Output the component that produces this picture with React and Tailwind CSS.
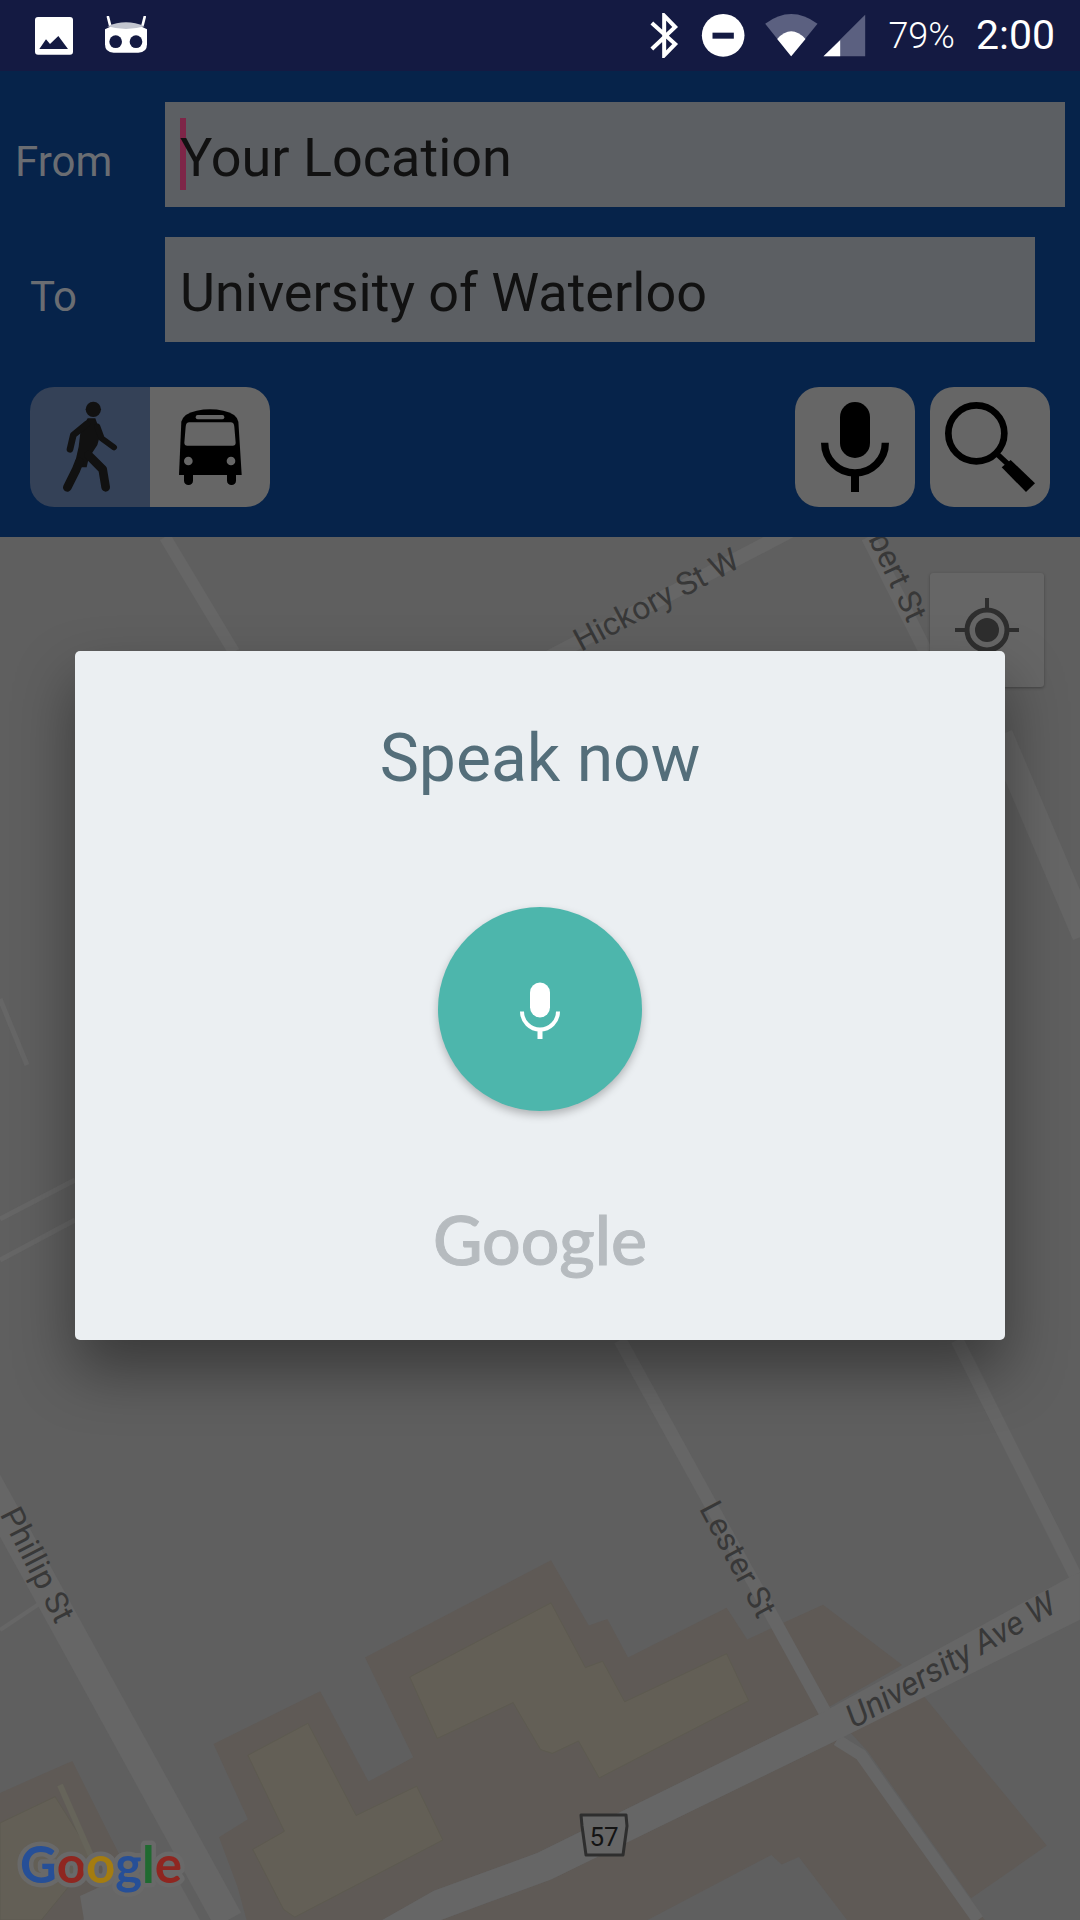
import React from 'react';

// map shapes were measured off a crop, so convert crop coords back to page px
const pts = (list) => list.map(([x, y]) => `${(x / 1.452).toFixed(1)},${(y / 2.657 + 1330).toFixed(1)}`).join(' ');

const tanBlocks = [
  [[310,1100],[465,960],[535,1200],[600,1135],[530,870],[800,612],[855,785],[882,768],[912,870],[1055,738],[1085,822],[1195,730],[1310,890],[1205,1000],[1190,1020],[780,1390],[630,1490],[555,1568],[358,1568],[345,1480],[318,1348],[360,1300]],
  [[1235,1070],[1340,970],[1520,1370],[1410,1510],[1260,1120]],
  [[640,1568],[800,1460],[1215,1090],[1250,1130],[1430,1568],[1230,1568],[1160,1400],[1135,1420],[1120,1395],[940,1568]],
  [[0,1230],[105,1145],[175,1400],[120,1568],[0,1568]],
];

const buildings = [
  [[595,922],[800,725],[850,897],[875,880],[907,988],[1055,860],[1087,985],[870,1190],[840,1092],[802,1125],[785,1115],[745,990],[635,1085]],
  [[360,1130],[447,1045],[517,1290],[605,1212],[643,1355],[428,1560],[412,1540],[367,1380],[413,1332]],
  [[0,1310],[80,1240],[135,1400],[60,1568],[0,1568]],
];

function MapLayer() {
  return (
    <svg className="absolute inset-0 w-full h-full" viewBox="0 537 1080 1383">
      <rect x="0" y="537" width="1080" height="1383" fill="#5f5f5f" />
      {tanBlocks.map((b, i) => <polygon key={i} points={pts(b)} fill="#5f5a56" />)}
      {buildings.map((b, i) => <polygon key={i} points={pts(b)} fill="#635f56" stroke="#5d5a50" strokeWidth="1" />)}

      <g fill="none" stroke="#666666" strokeLinecap="butt">
        <path d="M165 537 L234 652" strokeWidth="12" />
        <path d="M544 660 L792 530" strokeWidth="14" />
        <path d="M868 537 L926 652" strokeWidth="14" />
        <path d="M1000 735 L1085 935" strokeWidth="26" />
        <path d="M0 999 L27 1065" strokeWidth="5" />
        <path d="M0 1219 L75 1180" strokeWidth="5" />
        <path d="M0 1260 L75 1220" strokeWidth="5" />
        <path d="M620 1340 L826 1714" strokeWidth="13" />
        <path d="M837 1740 L861 1755 L978 1920" strokeWidth="12" />
        <path d="M957 1340 L1075 1575" strokeWidth="13" />
        <path d="M-30 1451 L228 1920" strokeWidth="30" />
        <path d="M0 1630 L45 1600" strokeWidth="4" />
      </g>
      <polygon points={pts([[1560,650],[1568,645],[1568,770],[1215,1090],[800,1460],[710,1520],[640,1568],[555,1568],[630,1490],[780,1390],[1190,1020]])} fill="#666666" />
      <path d="M60 1785 L92 1858" stroke="#66645a" strokeWidth="6" fill="none" />
      <polygon points="80,1896 165,1857 200,1920 84,1920" fill="#666666" />

      <g fill="#383838" fontFamily="Roboto, sans-serif" fontSize="32">
        <text transform="translate(581 652) rotate(-28)">Hickory St W</text>
        <text transform="translate(908 624) rotate(65)" textAnchor="end">Albert St</text>
        <text transform="translate(56 1625) rotate(63)" textAnchor="end">Phillip St</text>
        <text transform="translate(758 1620) rotate(62)" textAnchor="end">Lester St</text>
        <text transform="translate(854 1729) rotate(-30)" fontStyle="italic" fontSize="33">University Ave W</text>
      </g>

      <path d="M581 1815 L626 1815 L627 1826 L623 1855 L586 1855 L582 1826 Z" fill="#666666" stroke="#2e2e2e" strokeWidth="3" strokeLinejoin="round" />
      <text x="604" y="1846" textAnchor="middle" fontFamily="Roboto, sans-serif" fontSize="26" fill="#141414">57</text>

      <text x="20" y="1883" fontFamily="Lato, sans-serif" fontSize="51" fontWeight="700" stroke="#696969" strokeWidth="9" paintOrder="stroke" strokeLinejoin="round">
        <tspan fill="#264f97">G</tspan>
        <tspan fill="#8f2620">o</tspan>
        <tspan fill="#a47c10">o</tspan>
        <tspan fill="#264f97">g</tspan>
        <tspan fill="#1f6a30">l</tspan>
        <tspan fill="#8f2620">e</tspan>
      </text>
    </svg>
  );
}

function StatusBar() {
  return (
    <div className="h-[71px] bg-[#141a42] flex items-center justify-between pl-[34px] pr-[25px]">
      <div className="flex items-center gap-[30px]">
        <svg width="40" height="38" viewBox="105 51 114 114">
          <rect x="105" y="51" width="114" height="113" rx="9" fill="#fff" />
          <path d="M118 147 L138 118 L150 132 L175 108 L204 147 Z" fill="#141a42" />
        </svg>
        <svg width="44" height="40" viewBox="312 45 132 120">
          <path d="M324 48 L330 72 M434 48 L428 72" stroke="#fff" strokeWidth="8" strokeLinecap="round" />
          <path d="M315 85 Q378 50 441 85 L441 130 Q441 155 415 155 L341 155 Q315 155 315 130 Z" fill="#fff" />
          <path d="M322 76 Q378 52 434 76 Q378 92 322 76 Z" fill="#c3c6d0" />
          <circle cx="347" cy="122" r="19" fill="#141a42" />
          <circle cx="408" cy="122" r="19" fill="#141a42" />
        </svg>
      </div>
      <div className="flex items-center">
        <svg width="217" height="45" viewBox="85 40 650 135">
          <path d="M90 70 L160 133 L127 167 L127 48 L160 82 L90 148" fill="none" stroke="#fff" strokeWidth="12" />
          <circle cx="304" cy="107" r="64" fill="#fff" />
          <rect x="272" y="99" width="64" height="18" fill="#141a42" />
          <path d="M430 72 Q508 14 587 72 L508 170 Z" fill="#5b6080" />
          <path d="M466 118 Q508 72 551 118 L508 170 Z" fill="#fff" />
          <path d="M605 170 L730 45 L730 170 Z" fill="#5b6080" />
          <path d="M605 170 L655 122 L655 170 Z" fill="#fff" />
        </svg>
        <span className="ml-[21px] text-[36px] leading-none text-white font-['Roboto',sans-serif] font-light">79%</span>
        <span className="ml-[21px] text-[41px] leading-none text-white font-['Roboto',sans-serif]">2:00</span>
      </div>
    </div>
  );
}

function Field({ label, labelClass, widthClass, children }) {
  return (
    <div className="flex items-center">
      <div className={`w-[165px] pt-[15px] text-[42px] leading-none text-[#6a6d72] ${labelClass}`}>{label}</div>
      <div className={`relative h-[105px] bg-[#5c5f63] pl-[15px] flex items-center pt-[7px] text-[54px] leading-none text-[#111111] ${widthClass}`}>
        {children}
      </div>
    </div>
  );
}

function Header() {
  return (
    <div className="h-[466px] bg-[#06234a] pt-[31px] flex flex-col font-['Roboto',sans-serif]">
      <Field label="From" labelClass="pl-[15px]" widthClass="w-[900px]">
        <div className="absolute left-[15px] top-[16px] w-[6px] h-[72px] bg-[#7e2648]" />
        <span className="relative">Your Location</span>
      </Field>
      <div className="mt-[30px]">
        <Field label="To" labelClass="pl-[30px]" widthClass="w-[870px]">University of Waterloo</Field>
      </div>

      <div className="mt-[45px] pl-[30px] pr-[30px] flex justify-between">
        <div className="flex rounded-[24px] overflow-hidden">
          <div className="w-[120px] h-[120px] bg-[#344157]">
            <svg width="120" height="120" viewBox="30 21 360 360">
              <circle cx="220" cy="88" r="23" fill="#111" />
              <polygon points="203,115 226,115 242,160 232,195 206,235 200,262 162,262 176,200 182,150" fill="#111" />
              <path d="M200 132 L160 165 L150 208" fill="none" stroke="#111" strokeWidth="20" strokeLinecap="round" strokeLinejoin="round" />
              <path d="M232 140 L245 175 L282 202" fill="none" stroke="#111" strokeWidth="18" strokeLinecap="round" strokeLinejoin="round" />
              <path d="M178 245 L168 270 L142 322" fill="none" stroke="#111" strokeWidth="26" strokeLinecap="round" strokeLinejoin="round" />
              <path d="M205 225 L248 268 L257 322" fill="none" stroke="#111" strokeWidth="26" strokeLinecap="round" strokeLinejoin="round" />
            </svg>
          </div>
          <div className="w-[120px] h-[120px] bg-[#666666]">
            <svg width="120" height="120" viewBox="390 21 360 360">
              <path d="M484 125 Q490 100 530 92 Q570 84 610 92 Q650 100 655 125 L665 285 L477 285 Z" fill="#000" />
              <rect x="492" y="270" width="27" height="45" rx="13" fill="#000" />
              <rect x="621" y="270" width="27" height="45" rx="13" fill="#000" />
              <rect x="527" y="105" width="86" height="13" rx="6" fill="#666666" />
              <path d="M508 127 L632 127 Q642 127 643 140 L647 188 Q647 197 638 197 L502 197 Q493 197 493 188 L497 140 Q498 127 508 127 Z" fill="#666666" />
              <circle cx="505" cy="243" r="13" fill="#666666" />
              <circle cx="633" cy="243" r="13" fill="#666666" />
            </svg>
          </div>
        </div>

        <div className="flex gap-[15px]">
          <div className="w-[120px] h-[120px] rounded-[24px] bg-[#666666]">
            <svg width="120" height="120" viewBox="45 21 360 360">
              <rect x="180" y="66" width="90" height="168" rx="45" fill="#000" />
              <path d="M134 188 A91 91 0 0 0 316 188" fill="none" stroke="#000" strokeWidth="22" />
              <rect x="213" y="280" width="24" height="56" fill="#000" />
            </svg>
          </div>
          <div className="w-[120px] h-[120px] rounded-[24px] bg-[#666666]">
            <svg width="120" height="120" viewBox="450 21 360 360">
              <circle cx="589" cy="160" r="84" fill="none" stroke="#000" strokeWidth="20" />
              <path d="M648 219 L690 258" stroke="#000" strokeWidth="16" />
              <polygon points="692,240 765,310 738,336 665,262" fill="#000" />
            </svg>
          </div>
        </div>
      </div>
    </div>
  );
}

export default function App() {
  return (
    <div className="w-[1080px] h-[1920px] overflow-hidden flex flex-col bg-[#5f5f5f]">
      <StatusBar />
      <Header />
      <div className="relative flex-1 overflow-hidden">
        <MapLayer />

        {/* my location button sits on the map */}
        <div className="absolute left-[930px] top-[36px] w-[114px] h-[114px] rounded-[3px] bg-[#666666] shadow-[0_1px_3px_rgba(0,0,0,0.3)] flex items-center justify-center">
          <svg width="70" height="70" viewBox="0 0 70 70">
            <circle cx="35" cy="35" r="20" fill="none" stroke="#2e2e2e" strokeWidth="5" />
            <circle cx="35" cy="35" r="12" fill="#2e2e2e" />
            <path d="M35 3 V15 M35 55 V67 M3 35 H15 M55 35 H67" stroke="#2e2e2e" strokeWidth="4" />
          </svg>
        </div>

        {/* speak now dialog */}
        <div className="absolute left-[75px] top-[114px] w-[930px] h-[689px] rounded-[5px] bg-[#ebeff2] shadow-[0_30px_60px_rgba(0,0,0,0.4)] flex flex-col items-center">
          <div className="mt-[70px] text-[66px] leading-[75px] text-[#546e7a] font-['Roboto',sans-serif]">Speak now</div>
          <div className="mt-[111px] w-[204px] h-[204px] rounded-full bg-[#4db6ac] shadow-[0_4px_8px_rgba(0,0,0,0.25)] flex items-center justify-center">
            <svg width="60" height="60" viewBox="510 978.5 60 60">
              <rect x="530" y="982" width="20" height="35" rx="10" fill="#fff" />
              <path d="M522 1011 A18 18 0 0 0 558 1011" fill="none" stroke="#fff" strokeWidth="4" />
              <rect x="537.5" y="1028" width="5" height="11" fill="#fff" />
            </svg>
          </div>
          <div className="mt-[88px] text-[68px] leading-[80px] font-medium text-[#b6bbbf] font-['Lato',sans-serif] [-webkit-text-stroke:1px_#b6bbbf]">Google</div>
        </div>
      </div>
    </div>
  );
}
